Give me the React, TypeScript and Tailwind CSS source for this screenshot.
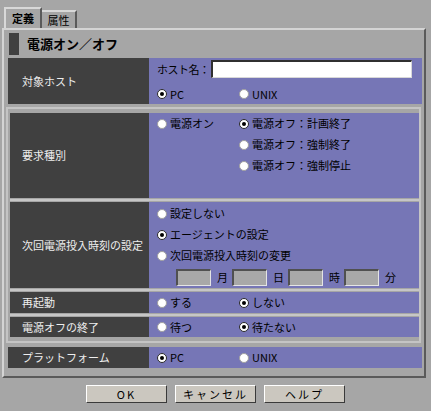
import React from "react"

/* ─── Bits ───────────────────────────────────────────────── */
function Radio({ checked = false, label }: { checked?: boolean; label: string }) {
  return (
    <span className="flex items-center gap-[3px] whitespace-nowrap">
      <span
        className={`flex h-[10px] w-[10px] shrink-0 items-center justify-center rounded-full bg-white border ${
          checked ? "border-[#2a2a2a]" : "border-[#a0a0a0]"
        }`}
      >
        {checked && <span className="h-[4px] w-[4px] rounded-full bg-black" />}
      </span>
      <span className="leading-none">{label}</span>
    </span>
  )
}

function SmallBox() {
  return (
    <span className="block h-[17px] w-[35px] bg-[#a8a8a8] border-t-2 border-l-2 border-r border-b border-t-[#505050] border-l-[#505050] border-r-[#e4e4e4] border-b-[#e4e4e4]" />
  )
}

function Sep() {
  return (
    <div className="flex h-[4px] items-center">
      <div className="h-[2px] w-full bg-[#c6c6c6]" />
    </div>
  )
}

function Button({ children }: { children: React.ReactNode }) {
  return (
    <button className="flex h-[18px] w-[81px] items-center justify-center bg-[#cbc7bf] border border-t-white border-l-white border-r-[#3a3a3a] border-b-[#3a3a3a] text-[11px] tracking-[2px] text-black">
      {children}
    </button>
  )
}

/* ─── Page ───────────────────────────────────────────────── */
export default function App() {
  return (
    <div className="h-[411px] w-[431px] overflow-hidden bg-[#a6a6a6] font-['Noto_Sans_CJK_JP',sans-serif] text-[11px] text-black">
      {/* Tabs */}
      <div className="flex h-[28px] items-end pl-[4px] pt-[7px]">
        <div className="flex h-[21px] w-[38px] items-center justify-center border-t-2 border-l-2 border-r-2 border-t-[#d8d8d8] border-l-[#d8d8d8] border-r-[#5a5a5a] font-bold">
          定義
        </div>
        <div className="flex h-[18px] w-[35px] items-center justify-center border-t-2 border-r-2 border-t-[#d8d8d8] border-r-[#5a5a5a]">
          属性
        </div>
      </div>

      {/* Panel */}
      <div className="ml-[2px] flex h-[350px] w-[424px] flex-col border-2 border-t-[#d4d4d4] border-l-[#d4d4d4] border-r-[#5a5a5a] border-b-[#5a5a5a] pl-[4px] pr-[2px]">
        {/* Header */}
        <div className="mt-[3px] flex h-[22px] items-center">
          <div className="ml-[1px] h-[22px] w-[10px] bg-[#404040]" />
          <span className="ml-[8px] text-[13px] font-bold">電源オン／オフ</span>
        </div>

        {/* Target host */}
        <div className="mt-[3px] flex h-[46px]">
          <div className="flex w-[141px] items-center bg-[#404040] pl-[14px] text-[#eeeeee]">対象ホスト</div>
          <div className="flex flex-1 flex-col bg-[#7676b6] pl-[8px] pt-[2px]">
            <div className="flex h-[18px] items-center">
              <span className="w-[54px] shrink-0 whitespace-nowrap tracking-[-0.5px]">ホスト名：</span>
              <span className="block h-[18px] w-[201px] shrink-0 bg-white border-t-2 border-l-2 border-r border-b border-t-[#303030] border-l-[#303030] border-r-[#d8d8d8] border-b-[#d8d8d8]" />
            </div>
            <div className="mt-[6px] flex h-[20px] items-center">
              <div className="w-[82px]">
                <Radio checked label="PC" />
              </div>
              <Radio label="UNIX" />
            </div>
          </div>
        </div>

        {/* Group */}
        <div className="ml-[-2px] mt-[3px] w-[415px] border-2 border-[#c4c4c4] pb-[4px] pl-[2px] pt-[4px]">
          {/* Request type */}
          <div className="flex h-[85px]">
            <div className="flex w-[139px] items-center bg-[#404040] pl-[12px] text-[#eeeeee]">要求種別</div>
            <div className="flex flex-1 bg-[#7676b6] pl-[8px]">
              <div className="flex h-[21px] w-[82px] items-center">
                <Radio label="電源オン" />
              </div>
              <div className="flex flex-col">
                <div className="flex h-[21px] items-center">
                  <Radio checked label="電源オフ：計画終了" />
                </div>
                <div className="flex h-[21px] items-center">
                  <Radio label="電源オフ：強制終了" />
                </div>
                <div className="flex h-[21px] items-center">
                  <Radio label="電源オフ：強制停止" />
                </div>
              </div>
            </div>
          </div>
          <Sep />

          {/* Next power-on time */}
          <div className="flex h-[86px]">
            <div className="flex w-[139px] items-center bg-[#404040] pl-[12px] text-[#eeeeee]">次回電源投入時刻の設定</div>
            <div className="flex flex-1 flex-col bg-[#7676b6] pl-[8px] pt-[1px]">
              <div className="flex h-[21px] items-center">
                <Radio label="設定しない" />
              </div>
              <div className="flex h-[21px] items-center">
                <Radio checked label="エージェントの設定" />
              </div>
              <div className="flex h-[21px] items-center">
                <Radio label="次回電源投入時刻の変更" />
              </div>
              <div className="ml-[19px] mt-[3px] flex h-[17px] items-center">
                <SmallBox />
                <span className="ml-[6px] mr-[4px]">月</span>
                <SmallBox />
                <span className="ml-[6px] mr-[4px]">日</span>
                <SmallBox />
                <span className="ml-[6px] mr-[4px]">時</span>
                <SmallBox />
                <span className="ml-[6px]">分</span>
              </div>
            </div>
          </div>
          <Sep />

          {/* Restart */}
          <div className="flex h-[21px]">
            <div className="flex w-[139px] items-center bg-[#404040] pl-[12px] text-[#eeeeee]">再起動</div>
            <div className="flex flex-1 items-center bg-[#7676b6] pl-[8px]">
              <div className="w-[82px]">
                <Radio label="する" />
              </div>
              <Radio checked label="しない" />
            </div>
          </div>
          <Sep />

          {/* Wait for power off */}
          <div className="flex h-[20px]">
            <div className="flex w-[139px] items-center bg-[#404040] pl-[12px] text-[#eeeeee]">電源オフの終了</div>
            <div className="flex flex-1 items-center bg-[#7676b6] pl-[8px]">
              <div className="w-[82px]">
                <Radio label="待つ" />
              </div>
              <Radio checked label="待たない" />
            </div>
          </div>
        </div>

        {/* Platform */}
        <div className="mt-[4px] flex h-[21px]">
          <div className="flex w-[141px] items-center bg-[#404040] pl-[14px] text-[#eeeeee]">プラットフォーム</div>
          <div className="flex flex-1 items-center bg-[#7676b6] pl-[8px]">
            <div className="w-[82px]">
              <Radio checked label="PC" />
            </div>
            <Radio label="UNIX" />
          </div>
        </div>
      </div>

      {/* Buttons */}
      <div className="mt-[7px] flex justify-center gap-[8px]">
        <Button>OK</Button>
        <Button>キャンセル</Button>
        <Button>ヘルプ</Button>
      </div>
    </div>
  )
}
